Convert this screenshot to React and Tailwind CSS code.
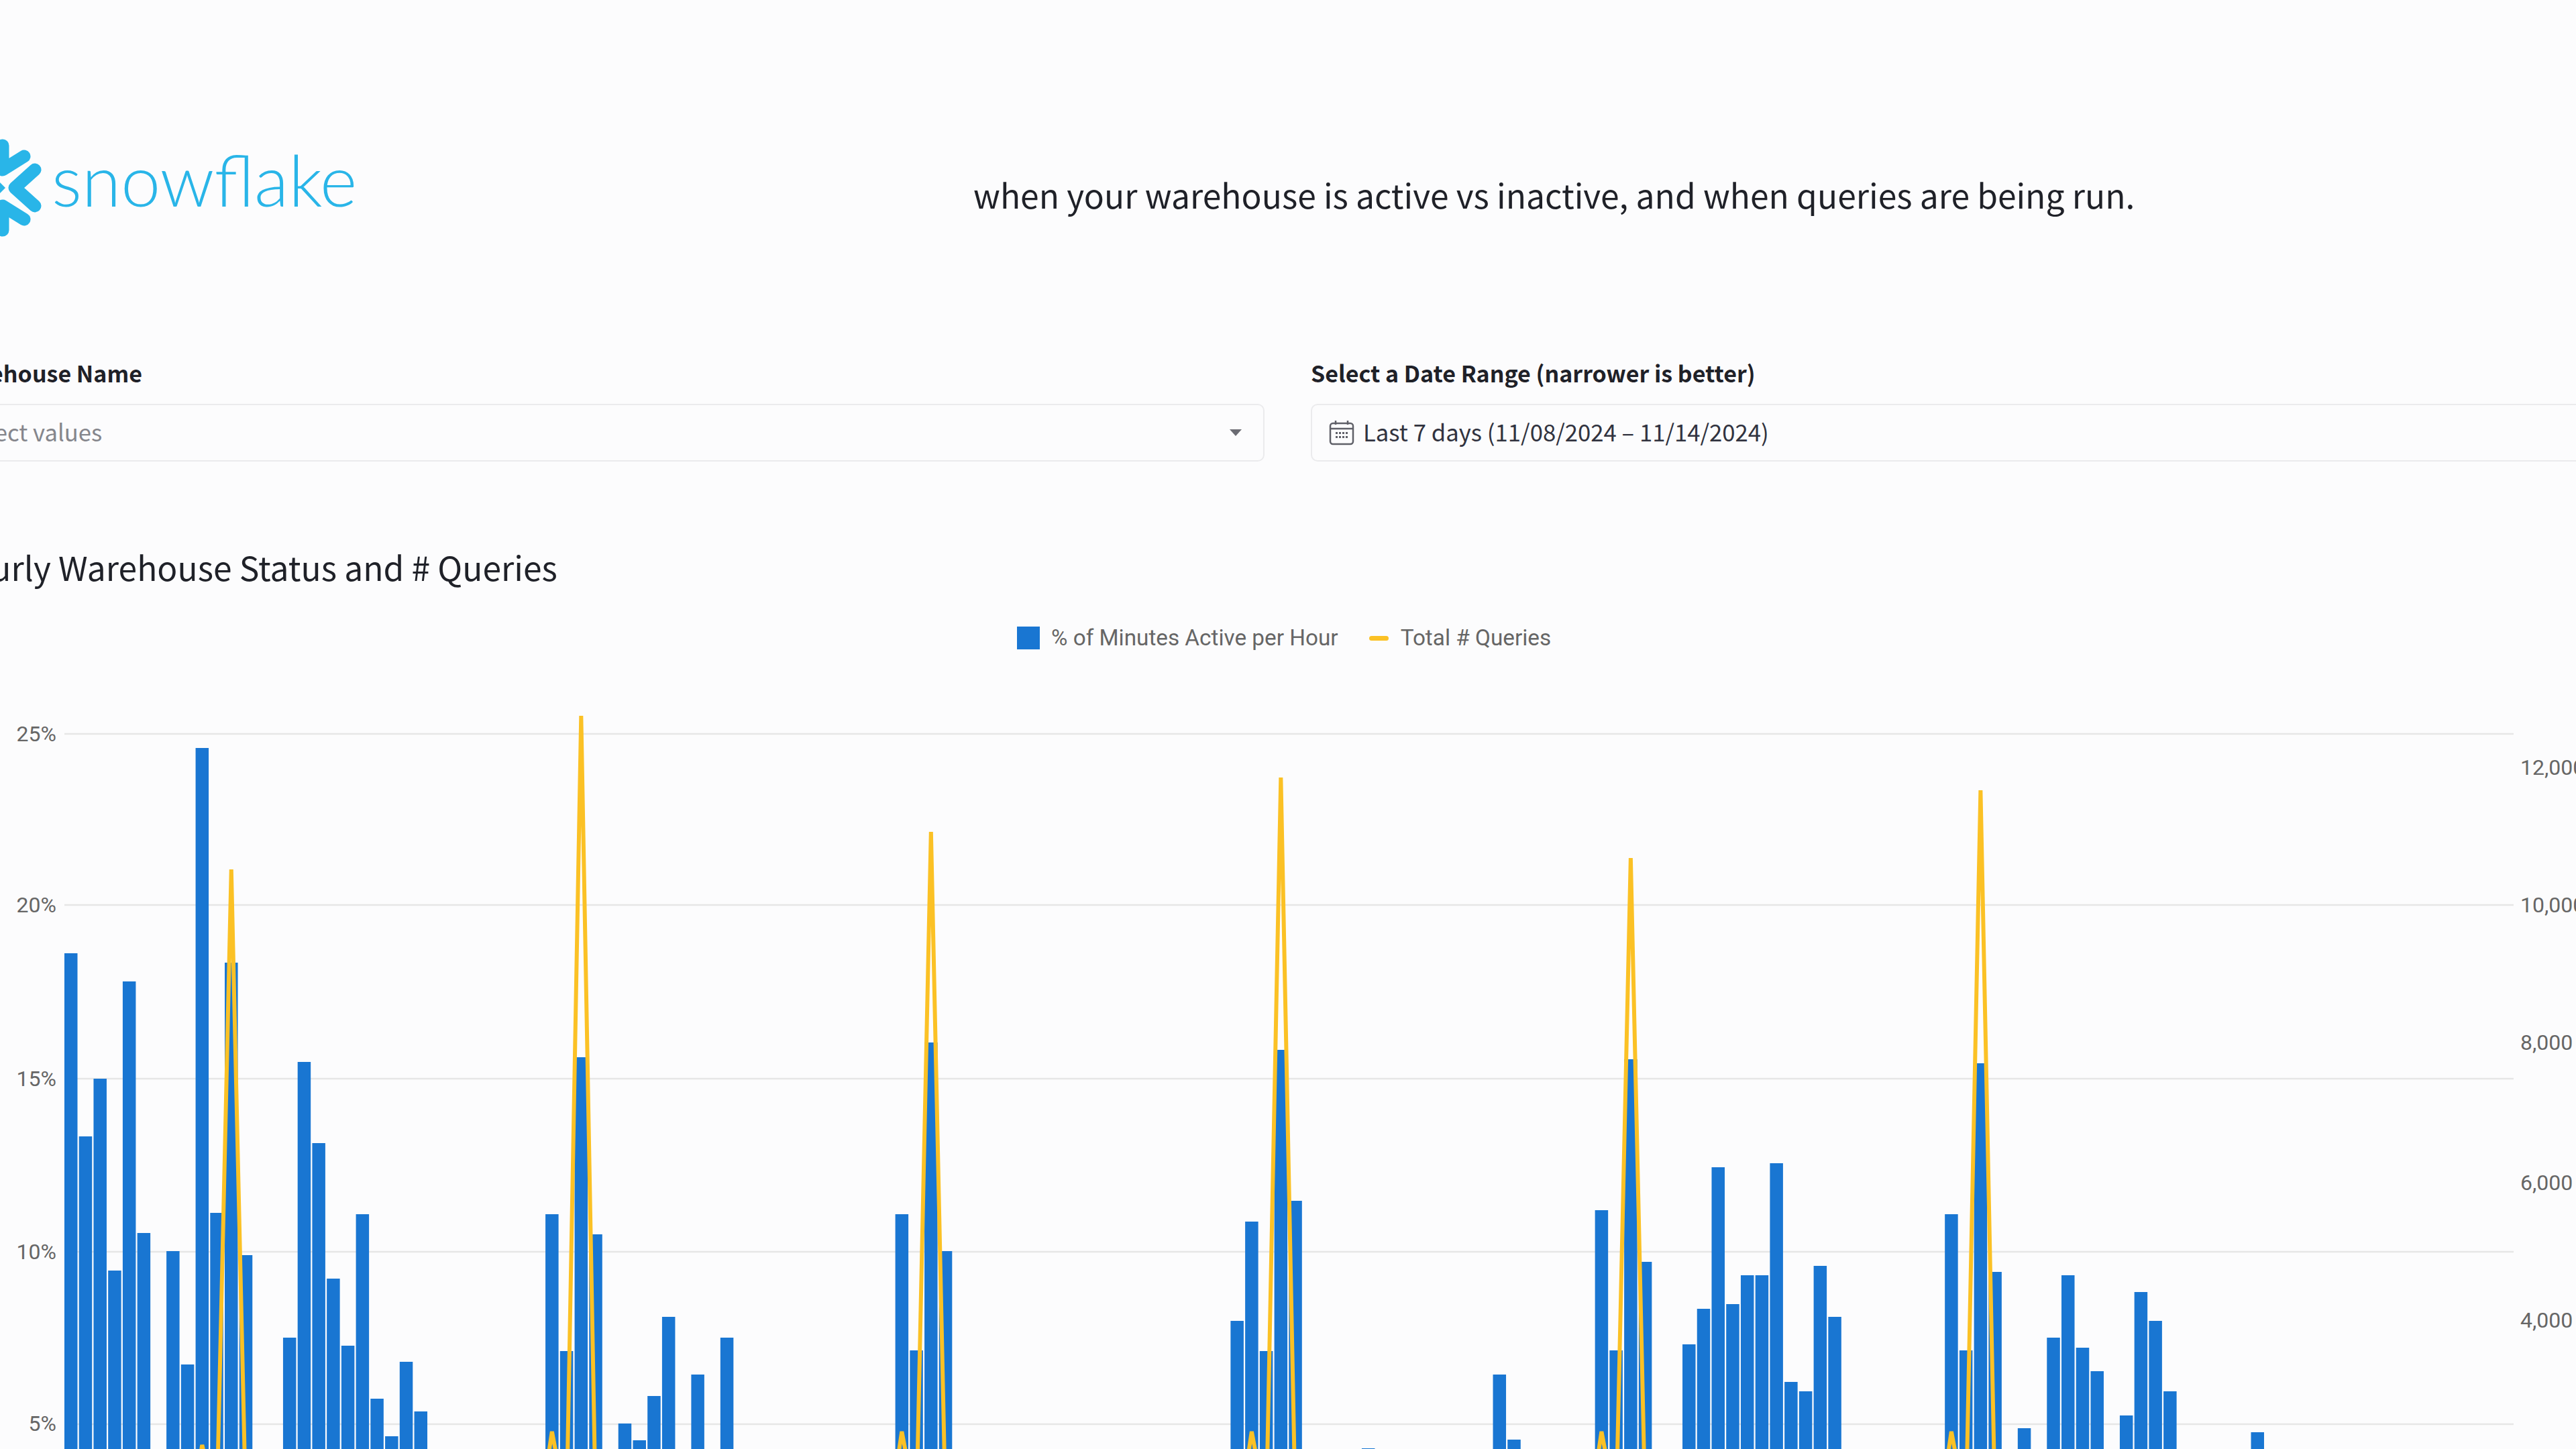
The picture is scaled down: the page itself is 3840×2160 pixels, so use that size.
import React from "react";

const sourceSans = "font-['Noto_Sans_CJK_SC',sans-serif]";

// [hour index, top of the bar in page pixels]
const bars = [
  [0, 1421], [1, 1694], [2, 1608], [3, 1894], [4, 1463], [5, 1838],
  [7, 1865], [8, 2034], [9, 1115], [10, 1808], [11, 1435], [12, 1871],
  [15, 1994], [16, 1583], [17, 1704], [18, 1906], [19, 2006], [20, 1810],
  [21, 2085], [22, 2141], [23, 2030], [24, 2104],
  [33, 1810], [34, 2014], [35, 1576], [36, 1840],
  [38, 2122], [39, 2147], [40, 2081], [41, 1963], [43, 2049], [45, 1994],
  [57, 1810], [58, 2013], [59, 1554], [60, 1865],
  [80, 1969], [81, 1821], [82, 2014], [83, 1565], [84, 1790], [89, 2159],
  [98, 2049], [99, 2146],
  [105, 1804], [106, 2013], [107, 1579], [108, 1881],
  [111, 2004], [112, 1951], [113, 1740], [114, 1944], [115, 1901], [116, 1901],
  [117, 1734], [118, 2060], [119, 2074], [120, 1887], [121, 1963],
  [129, 1810], [130, 2013], [131, 1585], [132, 1896], [134, 2129],
  [136, 1994], [137, 1901], [138, 2009], [139, 2044],
  [141, 2110], [142, 1926], [143, 1969], [144, 2074], [150, 2135],
];

const spikes = [
  { hour: 11, top: 1296, bump: 2154 },
  { hour: 35, top: 1067, bump: 2134 },
  { hour: 59, top: 1240, bump: 2134 },
  { hour: 83, top: 1159, bump: 2134 },
  { hour: 107, top: 1279, bump: 2134 },
  { hour: 131, top: 1178, bump: 2134 },
];

const barX = (hour) => 96 + hour * 21.73;
const lineX = (hour) => barX(hour) + 9.75;

const linePoints = () => {
  const points = [];
  spikes.forEach(({ hour, top, bump }) => {
    points.push([lineX(hour - 3), 2280]);
    points.push([lineX(hour - 2), bump]);
    points.push([lineX(hour - 1), 2250]);
    points.push([lineX(hour), top]);
    points.push([lineX(hour + 1), 2250]);
    points.push([lineX(hour + 2), 2280]);
  });
  return points.map(([x, y]) => `${x},${y}`).join(" ");
};

const gridLines = [1094, 1349, 1608, 1866, 2123];

const leftTicks = [
  ["25%", 1094],
  ["20%", 1349],
  ["15%", 1608],
  ["10%", 1866],
  ["5%", 2122],
];

const rightTicks = [
  ["12,000", 1144],
  ["10,000", 1349],
  ["8,000", 1554],
  ["6,000", 1763],
  ["4,000", 1968],
];

const SnowflakeMark = () => (
  <svg width="70" height="150" viewBox="0 205 70 150" fill="none" className="shrink-0">
    <g stroke="#29b5e8" strokeWidth="19" strokeLinecap="round" strokeLinejoin="round">
      <path d="M4 217V253L36 233" />
      <path d="M4 343V307L36 327" />
      <path d="M52 253L22 280L52 307" />
    </g>
    <path d="M-4 268L8 280L-4 292Z" fill="#29b5e8" />
  </svg>
);

const CalendarIcon = () => (
  <svg width="38" height="38" viewBox="0 0 38 38" fill="none" className="shrink-0">
    <rect x="2" y="5" width="34" height="31" rx="4" stroke="#5f6068" strokeWidth="2.5" />
    <path d="M2 13H36" stroke="#5f6068" strokeWidth="2.5" />
    <path d="M10 1V7M28 1V7" stroke="#5f6068" strokeWidth="2.5" />
    <g fill="#5f6068">
      <rect x="10" y="18" width="3" height="3" />
      <rect x="15" y="18" width="3" height="3" />
      <rect x="20" y="18" width="3" height="3" />
      <rect x="25" y="18" width="3" height="3" />
      <rect x="10" y="24" width="3" height="3" />
      <rect x="15" y="24" width="3" height="3" />
      <rect x="20" y="24" width="3" height="3" />
      <rect x="25" y="24" width="3" height="3" />
    </g>
  </svg>
);

const HourlyChart = () => (
  <svg width="3840" height="1120" viewBox="0 1040 3840 1120" className="block">
    {gridLines.map((y) => (
      <line key={y} x1="96" x2="3747" y1={y} y2={y} stroke="#e6e6e6" strokeWidth="2.5" />
    ))}
    {bars.map(([hour, top]) => (
      <rect key={hour} x={barX(hour)} y={top} width="19.5" height={2160 - top} fill="#1976d2" />
    ))}
    <polyline
      points={linePoints()}
      fill="none"
      stroke="#fbc125"
      strokeWidth="6"
      strokeLinejoin="bevel"
    />
    <g fill="#666666" fontFamily="Roboto, sans-serif" fontSize="32">
      {leftTicks.map(([label, y]) => (
        <text key={label} x="84" y={y + 11} textAnchor="end">{label}</text>
      ))}
      {rightTicks.map(([label, y]) => (
        <text key={label} x="3757" y={y + 11}>{label}</text>
      ))}
    </g>
  </svg>
);

export default function App() {
  return (
    <div className={`w-[3840px] h-[2160px] overflow-hidden bg-[#fcfcfd] text-[#1f2128] ${sourceSans}`}>
      {/* logo and intro line */}
      <div className="flex h-[518px] pt-[205px]">
        <div className="flex w-[1452px] shrink-0 h-[150px]">
          <SnowflakeMark />
          <span className="ml-[7px] h-[150px] text-[#29b5e8] font-['Lato',sans-serif] font-light text-[105.8px] leading-[126px]">
            snowflake
          </span>
        </div>
        <div className="flex-1 overflow-hidden">
          <p className="mt-[56px] text-[49.75px] leading-[56px] whitespace-nowrap -ml-[1px]">
            when your warehouse is active vs inactive, and when queries are being run.
          </p>
        </div>
      </div>

      {/* filters */}
      <div className="flex gap-[69px] -ml-[80px] w-[4200px]">
        <div className="w-[1965px] shrink-0">
          <div className="text-[34px] leading-[40px] font-semibold mt-[18px]">Warehouse Name</div>
          <div className="mt-[26px] flex items-center h-[86px] rounded-[10px] border-2 border-[#ebebed] pl-[20px] pr-[32px]">
            <span className="flex-1 pb-[4px] text-[34.7px] leading-none text-[#85868c]">Select values</span>
            <svg width="18" height="10" viewBox="0 0 18 10">
              <path d="M0 0H18L9 10Z" fill="#6b6c73" />
            </svg>
          </div>
        </div>
        <div className="flex-1">
          <div className="text-[34px] leading-[40px] font-semibold mt-[18px]">Select a Date Range (narrower is better)</div>
          <div className="mt-[26px] flex items-center gap-[13px] h-[86px] rounded-[10px] border-2 border-[#ebebed] pl-[25px]">
            <CalendarIcon />
            <span className="pb-[4px] text-[34.7px] leading-none text-[#31333f]">Last 7 days (11/08/2024 – 11/14/2024)</span>
          </div>
        </div>
      </div>

      {/* chart */}
      <h2 className="-ml-[80px] mt-[126px] text-[49.75px] leading-[60px] whitespace-nowrap font-normal">
        Hourly Warehouse Status and # Queries
      </h2>
      <div className="flex items-center h-[40px] mt-[57px] ml-[1516px] font-['Roboto',sans-serif] text-[33.3px] text-[#666666]">
        <span className="w-[34px] h-[34px] bg-[#1976d2]" />
        <span className="ml-[17px]">% of Minutes Active per Hour</span>
        <span className="ml-[46px] w-[29px] h-[7px] rounded-full bg-[#fbc125]" />
        <span className="ml-[18px]">Total # Queries</span>
      </div>
      <div className="mt-[69px]">
        <HourlyChart />
      </div>
    </div>
  );
}
